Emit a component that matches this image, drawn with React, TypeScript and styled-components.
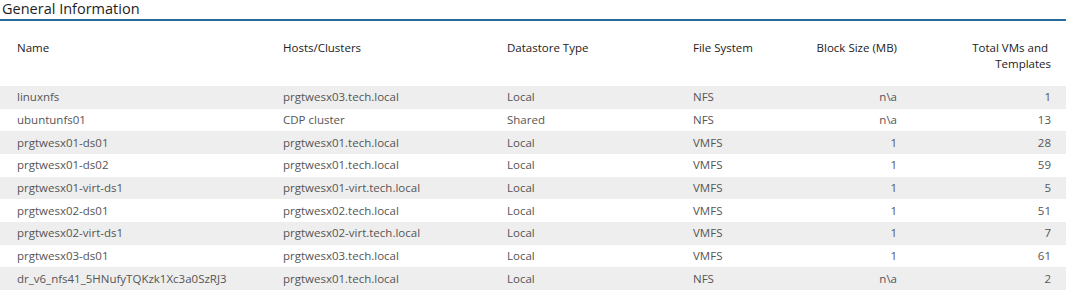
import React from "react";
import styled, { createGlobalStyle } from "styled-components";

interface Datastore {
  name: string;
  host: string;
  type: string;
  fs: string;
  block: string;
  total: number;
}

const rows: Datastore[] = [
  { name: "linuxnfs", host: "prgtwesx03.tech.local", type: "Local", fs: "NFS", block: "n\\a", total: 1 },
  { name: "ubuntunfs01", host: "CDP cluster", type: "Shared", fs: "NFS", block: "n\\a", total: 13 },
  { name: "prgtwesx01-ds01", host: "prgtwesx01.tech.local", type: "Local", fs: "VMFS", block: "1", total: 28 },
  { name: "prgtwesx01-ds02", host: "prgtwesx01.tech.local", type: "Local", fs: "VMFS", block: "1", total: 59 },
  { name: "prgtwesx01-virt-ds1", host: "prgtwesx01-virt.tech.local", type: "Local", fs: "VMFS", block: "1", total: 5 },
  { name: "prgtwesx02-ds01", host: "prgtwesx02.tech.local", type: "Local", fs: "VMFS", block: "1", total: 51 },
  { name: "prgtwesx02-virt-ds1", host: "prgtwesx02-virt.tech.local", type: "Local", fs: "VMFS", block: "1", total: 7 },
  { name: "prgtwesx03-ds01", host: "prgtwesx03.tech.local", type: "Local", fs: "VMFS", block: "1", total: 61 },
  { name: "dr_v6_nfs41_5HNufyTQKzk1Xc3a0SzRJ3", host: "prgtwesx01.tech.local", type: "Local", fs: "NFS", block: "n\\a", total: 2 },
];

// column widths in px, in table order
const widths = [266, 224, 186, 114, 122, 154];

const GlobalStyle = createGlobalStyle`
  body {
    margin: 0;
    background: #ffffff;
    font-family: "Open Sans", "Noto Sans", sans-serif;
  }
`;

const App = () => {
  return (
    <>
      <GlobalStyle />
      <Section>
        <Title>General Information</Title>
        <Grid>
          <colgroup>
            {widths.map((w, i) => (
              <Col key={i} $width={w} />
            ))}
          </colgroup>
          <thead>
            <tr>
              <HeadCell>Name</HeadCell>
              <HeadCell>Hosts/Clusters</HeadCell>
              <HeadCell>Datastore Type</HeadCell>
              <HeadCell>File System</HeadCell>
              <HeadCell $right>Block Size (MB)</HeadCell>
              <HeadCell $right>
                Total VMs and&nbsp;
                <br />
                Templates
              </HeadCell>
            </tr>
          </thead>
          <tbody>
            {rows.map((r, i) => (
              <Row key={r.name + i} $striped={i % 2 === 0}>
                <Cell>{r.name}</Cell>
                <Cell>{r.host}</Cell>
                <Cell>{r.type}</Cell>
                <Cell>{r.fs}</Cell>
                <Cell $right>{r.block}</Cell>
                <Cell $right>{r.total}</Cell>
              </Row>
            ))}
          </tbody>
        </Grid>
      </Section>
    </>
  );
};

const Section = styled.div`
  width: 1066px;
`;

const Title = styled.h2`
  margin: 0;
  padding-left: 2px;
  height: 19px;
  line-height: 17px;
  font-size: 14.5px;
  font-weight: 400;
  color: #1e1e1e;
  border-bottom: 2px solid #2a6b9c;
`;

const Grid = styled.table`
  margin-top: 1px;
  width: 1066px;
  border-collapse: collapse;
  table-layout: fixed;
  font-size: 11.5px;
`;

const Col = styled.col<{ $width: number }>`
  width: ${p => p.$width}px;
`;

const HeadCell = styled.th<{ $right?: boolean }>`
  height: 64px;
  box-sizing: border-box;
  padding: 18px 15px 14px 17px;
  line-height: 16px;
  vertical-align: top;
  text-align: ${p => (p.$right ? "right" : "left")};
  font-weight: 400;
  color: #222222;
  white-space: nowrap;
`;

const Row = styled.tr<{ $striped: boolean }>`
  background: ${p => (p.$striped ? "#eeeeee" : "#ffffff")};
`;

const Cell = styled.td<{ $right?: boolean }>`
  height: 22.67px;
  padding: 0 15px 0 17px;
  line-height: 16px;
  vertical-align: middle;
  text-align: ${p => (p.$right ? "right" : "left")};
  color: #555555;
  white-space: nowrap;
`;

export default App;
